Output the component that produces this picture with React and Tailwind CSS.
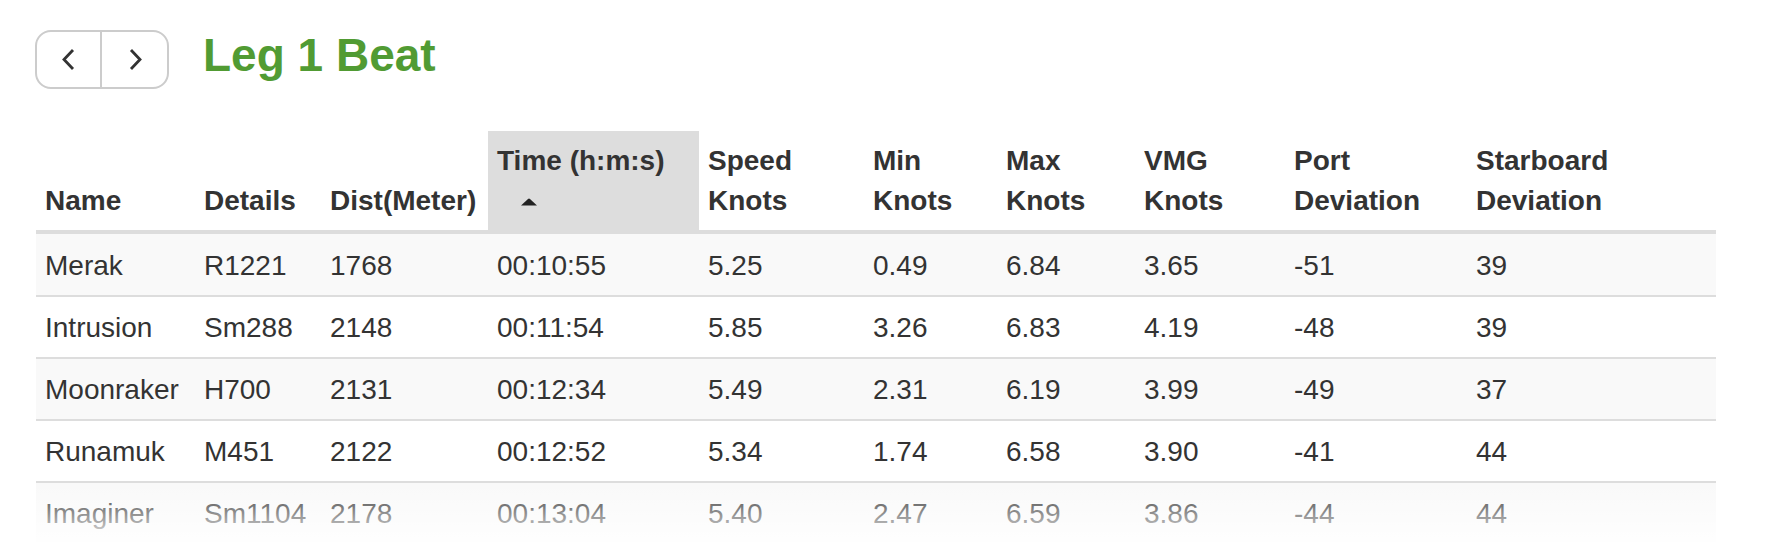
import { Fragment } from 'react'

const columns = [
  { label: ['Name'], width: 'w-[159px]' },
  { label: ['Details'], width: 'w-[126px]' },
  { label: ['Dist(Meter)'], width: 'w-[167px]' },
  { label: ['Time (h:m:s)'], width: 'w-[211px]', sorted: true },
  { label: ['Speed', 'Knots'], width: 'w-[165px]' },
  { label: ['Min', 'Knots'], width: 'w-[133px]' },
  { label: ['Max', 'Knots'], width: 'w-[138px]' },
  { label: ['VMG', 'Knots'], width: 'w-[150px]' },
  { label: ['Port', 'Deviation'], width: 'w-[182px]' },
  { label: ['Starboard', 'Deviation'], width: 'w-[249px]' },
]

const rows = [
  ['Merak', 'R1221', '1768', '00:10:55', '5.25', '0.49', '6.84', '3.65', '-51', '39'],
  ['Intrusion', 'Sm288', '2148', '00:11:54', '5.85', '3.26', '6.83', '4.19', '-48', '39'],
  ['Moonraker', 'H700', '2131', '00:12:34', '5.49', '2.31', '6.19', '3.99', '-49', '37'],
  ['Runamuk', 'M451', '2122', '00:12:52', '5.34', '1.74', '6.58', '3.90', '-41', '44'],
  ['Imaginer', 'Sm1104', '2178', '00:13:04', '5.40', '2.47', '6.59', '3.86', '-44', '44'],
]

function Chevron({ dir }) {
  const points = dir === 'left' ? '12,1 3,10.5 12,20' : '3,1 12,10.5 3,20'
  return (
    <svg width="15" height="22" viewBox="0 0 15 22" fill="none">
      <polyline points={points} stroke="#333" strokeWidth="2.8" />
    </svg>
  )
}

function SortUp() {
  return (
    <svg width="18" height="8" viewBox="0 0 18 8">
      <path d="M1 7.5 L8 1 Q9 0.2 10 1 L17 7.5 Z" fill="#222" />
    </svg>
  )
}

export default function App() {
  return (
    <div className="relative h-[542px] overflow-hidden bg-white pl-[35px] pt-[30px] font-['Liberation_Sans',Arial,sans-serif] text-[#333]">
      <div className="flex items-start gap-[34px]">
        <div className="flex h-[59px] w-[134px] overflow-hidden rounded-[16px] border-2 border-[#ccc] bg-white">
          <button className="flex w-[65px] items-center justify-center border-r-2 border-[#ccc]">
            <Chevron dir="left" />
          </button>
          <button className="flex flex-1 items-center justify-center pl-[2px]">
            <Chevron dir="right" />
          </button>
        </div>
        <h1 className="mt-[2px] text-[46px] font-bold leading-[46px] text-[#519b33]">Leg 1 Beat</h1>
      </div>

      <table className="ml-[1px] mt-[42px] table-fixed text-[28px]">
        <colgroup>
          {columns.map((c, i) => (
            <col key={i} className={c.width} />
          ))}
        </colgroup>
        <thead>
          <tr className="border-b-4 border-[#ddd]">
            {columns.map((c, i) => (
              <th
                key={i}
                className={
                  'px-[9px] pb-[9px] pt-[10px] text-left align-bottom font-bold leading-[40px] ' +
                  (c.sorted ? 'bg-[#ddd]' : '')
                }
              >
                {c.label.map((l, j) => (
                  <Fragment key={j}>
                    <div className="whitespace-nowrap">{l}</div>
                  </Fragment>
                ))}
                {c.sorted && (
                  <div className="flex h-[40px] items-center pl-[23px] pt-[1px]">
                    <SortUp />
                  </div>
                )}
              </th>
            ))}
          </tr>
        </thead>
        <tbody>
          {rows.map((r, i) => (
            <tr key={i} className={'border-t-2 border-[#ddd] ' + (i % 2 === 0 ? 'bg-[#f9f9f9]' : 'bg-white')}>
              {r.map((v, j) => (
                <td
                  key={j}
                  className={
                    'whitespace-nowrap px-[9px] pb-[9px] leading-[40px] ' + (i === 0 ? 'pt-[12px]' : 'pt-[11px]')
                  }
                >
                  {v}
                </td>
              ))}
            </tr>
          ))}
        </tbody>
      </table>

      <div className="pointer-events-none absolute bottom-0 left-0 right-0 h-[58px] bg-linear-to-b from-white/0 to-white/90" />
    </div>
  )
}
